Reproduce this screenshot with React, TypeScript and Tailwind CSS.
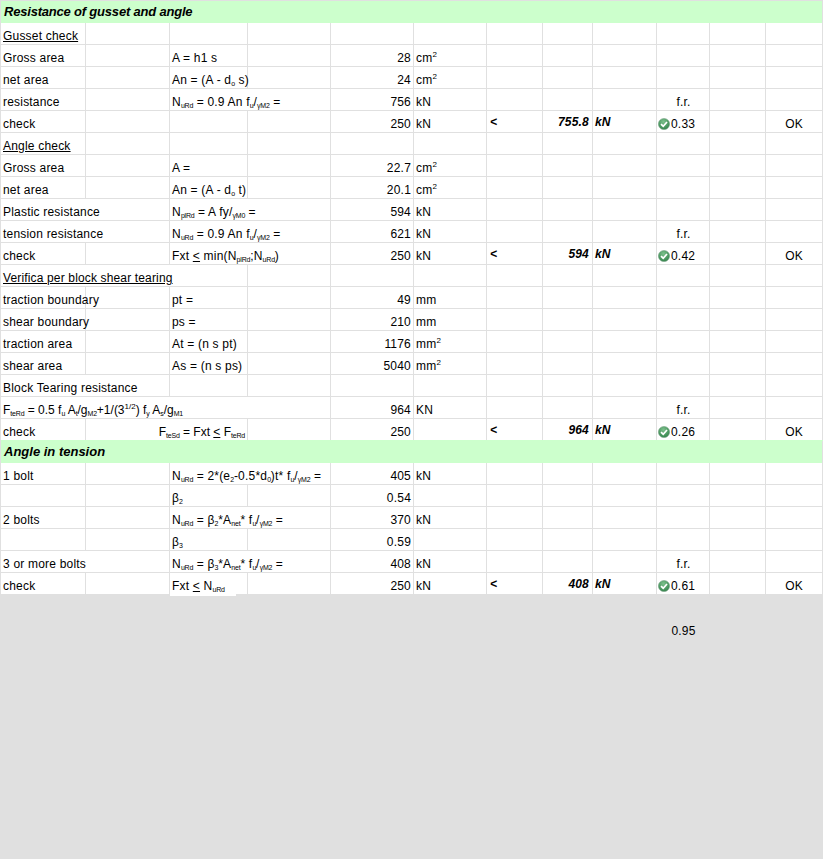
import type { ReactNode } from "react";

// column widths incl. right gridline: 85 84 78 83 83 73 56 50 64 53 56 57
const cols = "grid grid-cols-[85px_84px_78px_83px_83px_73px_56px_50px_64px_53px_56px_57px]";

type CellDef = { span?: 1 | 2 | 3 | 4; node?: ReactNode; cls?: string };

const spans = { 1: "col-span-1", 2: "col-span-2", 3: "col-span-3", 4: "col-span-4" };

function Sub({ children }: { children: ReactNode }) {
  return <sub className="text-[7px] tracking-[-0.2px] bottom-[-2px]">{children}</sub>;
}

function Sup({ children }: { children: ReactNode }) {
  return <sup className="text-[8px] tracking-normal top-[-5px]">{children}</sup>;
}

function Cell({ span = 1, node, cls = "" }: CellDef) {
  return (
    <div className={`${spans[span]} relative border-r border-[#e0e0e0] px-[2px] pt-[5px] whitespace-nowrap leading-[16px] ${cls}`}>
      {node}
    </div>
  );
}

function Check() {
  return (
    <svg width="12" height="12" viewBox="0 0 12 12" className="mr-[1px] shrink-0">
      <defs>
        <radialGradient id="ok" cx="0.45" cy="0.3" r="0.75">
          <stop offset="0" stopColor="#7cc08c" />
          <stop offset="1" stopColor="#2f8048" />
        </radialGradient>
      </defs>
      <circle cx="6" cy="6" r="5.6" fill="url(#ok)" stroke="#6f9a7c" strokeWidth="0.5" />
      <path d="M3 6.2 L5.2 8.2 L9 4" fill="none" stroke="#ffffff" strokeWidth="1.7" />
    </svg>
  );
}

// one spreadsheet row: label part (first 5 columns are passed as cells), then unit & result columns
function Row({
  left,
  value,
  unit,
  fr,
  result,
  beforeGreen,
}: {
  left: CellDef[];
  value?: ReactNode;
  unit?: ReactNode;
  fr?: boolean;
  result?: { cap: string; ratio: string };
  beforeGreen?: boolean;
}) {
  return (
    <div className={`${cols} h-[22px] border-b ${beforeGreen ? "border-[#ccffcc]" : "border-[#e0e0e0]"}`}>
      {left.map((c, i) => (
        <Cell key={i} {...c} />
      ))}
      <Cell node={value} cls="text-right" />
      <Cell node={unit} />
      <Cell node={result ? <span className="font-bold italic relative -top-[2px] pl-[1px]">&lt;</span> : undefined} />
      <Cell node={result ? <span className="font-bold italic relative -top-[2px]">{result.cap}</span> : undefined} cls="text-right pr-[3px]" />
      <Cell node={result ? <span className="font-bold italic relative -top-[2px]">kN</span> : undefined} />
      <div className="border-r border-[#e0e0e0] pt-[5px] leading-[16px] whitespace-nowrap">
        {fr && <div className="text-center pl-[1px]">f.r.</div>}
        {result && (
          <div className="flex items-center pl-[1px]">
            <Check />
            <span>{result.ratio}</span>
          </div>
        )}
      </div>
      <Cell />
      <Cell node={result ? "OK" : undefined} cls="text-center pl-[2px]" />
    </div>
  );
}

function Title({ text, cls }: { text: string; cls: string }) {
  return (
    <div className={`h-[22px] bg-[#ccffcc] border-r border-r-[#e0e0e0] px-[3px] text-[13px] font-bold italic leading-[21px] ${cls}`}>
      {text}
    </div>
  );
}

const blank: CellDef = {};

function std(label: ReactNode, formula?: ReactNode): CellDef[] {
  return [{ node: label }, blank, { node: formula }, blank];
}

// formula long enough to run across the 247 gridline
function wide(label: ReactNode, formula: ReactNode, labelWide?: boolean): CellDef[] {
  return labelWide
    ? [{ span: 2, node: label }, { span: 2, node: formula }]
    : [{ node: label }, blank, { span: 2, node: formula }];
}

const NuRd = (
  <>
    N<Sub>uRd</Sub>
  </>
);
const fuGamma = (
  <>
    f<Sub>u</Sub>/<Sub>&gamma;M2</Sub>
  </>
);

export default function App() {
  return (
    <div className="min-h-[859px] bg-[#e0e0e0] font-['Liberation_Sans',Arial,sans-serif] text-[12px] tracking-[0.2px] text-black">
      <div className="bg-white border-t border-l border-[#e0e0e0] w-[823px]">
        <Title text="Resistance of gusset and angle" cls="tracking-[-0.2px]" />
        <Row left={std(<u>Gusset check</u>)} />
        <Row left={std("Gross area", "A = h1 s")} value="28" unit={<>cm<Sup>2</Sup></>} />
        <Row left={std("net area", <>An = (A - d<Sub>o</Sub> s)</>)} value="24" unit={<>cm<Sup>2</Sup></>} />
        <Row left={wide("resistance", <>{NuRd} = 0.9 An {fuGamma} =</>)} value="756" unit="kN" fr />
        <Row left={std("check")} value="250" unit="kN" result={{ cap: "755.8", ratio: "0.33" }} />
        <Row left={std(<u>Angle check</u>)} />
        <Row left={std("Gross area", "A =")} value="22.7" unit={<>cm<Sup>2</Sup></>} />
        <Row left={std("net area", <>An = (A - d<Sub>o</Sub> t)</>)} value="20.1" unit={<>cm<Sup>2</Sup></>} />
        <Row
          left={wide("Plastic resistance", <>N<Sub>plRd</Sub> = A fy/<Sub>&gamma;M0</Sub> =</>, true)}
          value="594"
          unit="kN"
        />
        <Row left={wide("tension resistance", <>{NuRd} = 0.9 An {fuGamma} =</>, true)} value="621" unit="kN" fr />
        <Row
          left={wide("check", <>Fxt <u>&lt;</u> min(N<Sub>plRd</Sub>;{NuRd})</>)}
          value="250"
          unit="kN"
          result={{ cap: "594", ratio: "0.42" }}
        />
        <Row left={[{ span: 3, node: <u>Verifica per block shear tearing</u>, cls: "tracking-[0.15px]" }, blank]} />
        <Row left={std("traction boundary", "pt =")} value="49" unit="mm" />
        <Row left={std("shear boundary", "ps =")} value="210" unit="mm" />
        <Row left={std("traction area", "At = (n s pt)")} value="1176" unit={<>mm<Sup>2</Sup></>} />
        <Row left={std("shear area", "As = (n s ps)")} value="5040" unit={<>mm<Sup>2</Sup></>} />
        <Row left={[{ span: 2, node: "Block Tearing resistance" }, blank, blank]} />
        <Row
          left={[
            {
              span: 4,
              cls: "tracking-normal",
              node: (
                <>
                  F<Sub>teRd</Sub> = 0.5 f<Sub>u</Sub> A<Sub>t</Sub>/g<Sub>M2</Sub>+1/(3<Sup>1/2</Sup>) f<Sub>y</Sub> A<Sub>s</Sub>/g<Sub>M1</Sub>
                </>
              ),
            },
          ]}
          value="964"
          unit="KN"
          fr
        />
        <Row
          left={[
            { node: "check" },
            {
              span: 2,
              node: <>F<Sub>teSd</Sub> = Fxt <u>&lt;</u> F<Sub>teRd</Sub></>,
              cls: "text-right tracking-normal",
            },
            blank,
          ]}
          value="250"
          result={{ cap: "964", ratio: "0.26" }}
          beforeGreen
        />
        <Title text="Angle in tension" cls="tracking-normal" />
        <Row
          left={wide("1 bolt", <>{NuRd} = 2*(e<Sub>2</Sub>-0.5*d<Sub>0</Sub>)t* {fuGamma} =</>)}
          value="405"
          unit="kN"
        />
        <Row left={std("", <>&beta;<Sub>2</Sub></>)} value="0.54" />
        <Row left={wide("2 bolts", <>{NuRd} = &beta;<Sub>2</Sub>*A<Sub>net</Sub>* {fuGamma} =</>)} value="370" unit="kN" />
        <Row left={std("", <>&beta;<Sub>3</Sub></>)} value="0.59" />
        <Row
          left={wide("3 or more bolts", <>{NuRd} = &beta;<Sub>3</Sub>*A<Sub>net</Sub>* {fuGamma} =</>, true)}
          value="408"
          unit="kN"
          fr
        />
        <Row
          left={std(
            "check",
            <>
              Fxt <u>&lt;</u> {NuRd}
              {/* text box of this cell spills 2px below the table */}
              <span className="absolute left-0 top-full w-[66px] h-[2px] bg-white" />
            </>,
          )}
          value="250"
          unit="kN"
          result={{ cap: "408", ratio: "0.61" }}
        />
      </div>
      <div className="pl-[657px] pr-[113px] pt-[28px] text-center leading-[16px]">0.95</div>
    </div>
  );
}
